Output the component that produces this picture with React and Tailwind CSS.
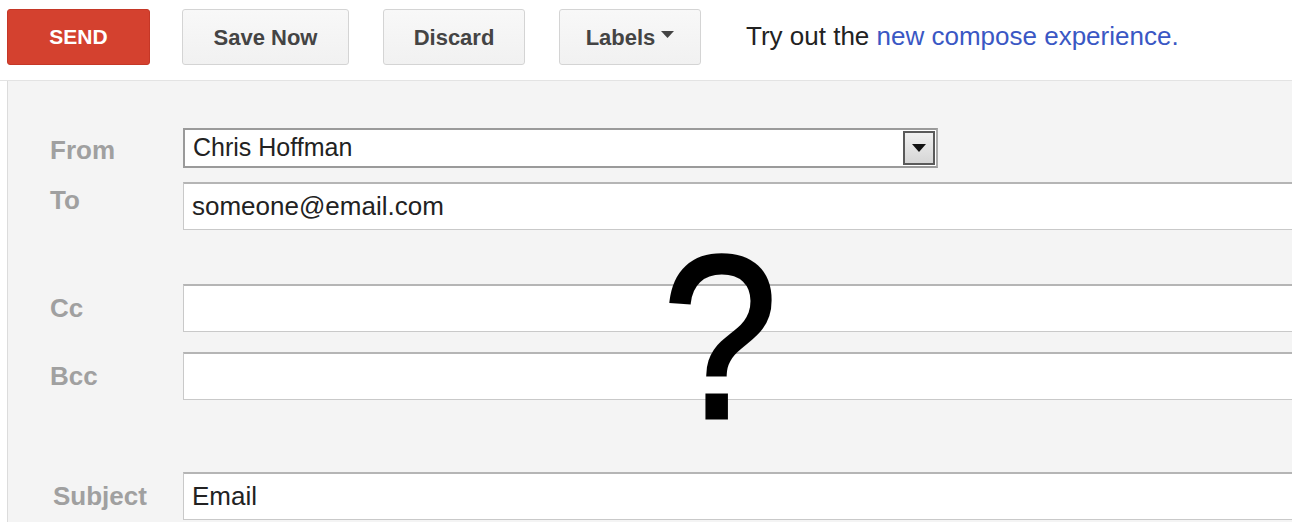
export default function App() {
  const font = { fontFamily: '"Liberation Sans", Arial, sans-serif' };
  const btn =
    "h-[56px] flex items-center justify-center rounded-[3px] border border-[#d4d4d4] bg-gradient-to-b from-[#f8f8f8] to-[#f1f1f1] text-[#444] font-bold text-[22px]";
  const label = "w-[175px] pl-[42px] text-[26px] leading-[30px] font-bold text-[#a0a0a0] shrink-0";
  const input =
    "h-[48px] w-[1200px] shrink-0 bg-white border border-[#c9c9c9] border-t-[#b5b5b5] border-t-2 flex items-center pl-[8px] text-[26px] text-[#222]";
  return (
    <div className="relative w-[1292px] h-[522px] overflow-hidden bg-white flex flex-col" style={font}>
      <div className="h-[81px] shrink-0 flex items-start pt-[9px] pl-[7px] border-b border-[#e3e3e3]">
        <div className="h-[56px] w-[143px] flex items-center justify-center rounded-[3px] bg-[#d4412f] border border-[#c53727] text-white font-bold text-[21px]">
          SEND
        </div>
        <div className={`${btn} w-[167px] ml-[32px]`}>Save Now</div>
        <div className={`${btn} w-[142px] ml-[34px]`}>Discard</div>
        <div className={`${btn} w-[142px] ml-[34px] gap-[6px]`}>
          Labels
          <svg width="13" height="8" viewBox="0 0 13 8" className="mt-[-4px]">
            <path d="M0 0 H13 L6.5 7 Z" fill="#444" />
          </svg>
        </div>
        <div className="ml-[45px] h-[54px] flex items-center text-[26px] text-[#222]">
          Try out the&nbsp;<span className="text-[#3a57c4]">new compose experience.</span>
        </div>
      </div>
      <div className="flex-1 ml-[7px] border-l border-[#dcdcdc] bg-[#f4f4f4] overflow-hidden flex flex-col pt-[47px]">
        <div className="flex items-center h-[40px] shrink-0">
          <div className={`${label} pt-[4px]`}>From</div>
          <div className="h-[40px] w-[755px] shrink-0 bg-white border-2 border-[#9a9a9a] border-r-[#aaa] flex items-center pl-[8px] text-[25px] text-[#222]">
            <span className="flex-1">Chris Hoffman</span>
            <div className="h-[34px] w-[32px] border-2 border-[#5a5a5a] bg-gradient-to-b from-[#f0f0f0] to-[#d6d6d6] flex items-center justify-center mr-[1px]">
              <svg width="14" height="8" viewBox="0 0 14 8">
                <path d="M0 0 H14 L7 8 Z" fill="#111" />
              </svg>
            </div>
          </div>
        </div>
        <div className="flex items-center h-[48px] shrink-0 mt-[14px]">
          <div className={`${label} pb-[12px]`}>To</div>
          <div className={input}>someone@email.com</div>
        </div>
        <div className="flex items-center h-[48px] shrink-0 mt-[54px]">
          <div className={label}>Cc</div>
          <div className={input}></div>
        </div>
        <div className="flex items-center h-[48px] shrink-0 mt-[20px]">
          <div className={label}>Bcc</div>
          <div className={input}></div>
        </div>
        <div className="flex items-center h-[48px] shrink-0 mt-[72px]">
          <div className={`${label} pl-[45px]`}>Subject</div>
          <div className={input}>Email</div>
        </div>
      </div>
      <div className="absolute left-[655px] top-[220px] text-[234px] leading-none text-black pointer-events-none scale-x-[0.89] [-webkit-text-stroke:3px_black]">
        ?
      </div>
    </div>
  );
}
